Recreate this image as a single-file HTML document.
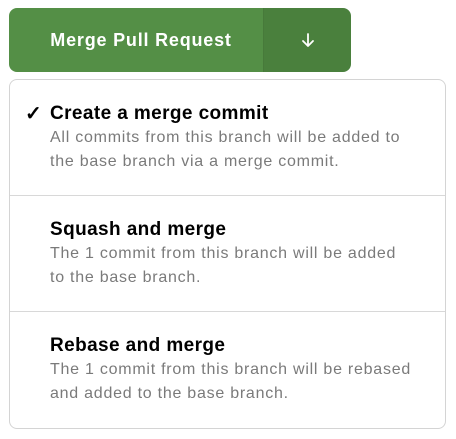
<!DOCTYPE html>
<html><head><style>
body{margin:0;background:#fff;width:456px;height:439px;font-family:"Liberation Sans",Arial,sans-serif;position:relative;overflow:hidden}
.btn{position:absolute;left:9px;top:8px;width:342px;height:64px;border-radius:8px;overflow:hidden;display:flex}
.b1{width:254px;background:#548f46;color:#fff;font-weight:bold;font-size:18px;letter-spacing:0.8px;display:flex;align-items:center;justify-content:center;padding-left:10px;box-sizing:border-box}
.b2{flex:1;background:#4a803d;border-left:1px solid #477a3a;display:flex;align-items:center;justify-content:center}
.panel{position:absolute;left:9px;top:79px;width:437px;height:350px;border:1px solid #d4d4d4;border-radius:8px;box-sizing:border-box}
.sec{padding:22px 0 21px 40px;position:relative}
.sec+.sec{border-top:1px solid #d8d8d8}
.t{font-weight:bold;font-size:19px;letter-spacing:0.4px;line-height:24px;color:#000}
.d{font-size:16px;letter-spacing:0.75px;line-height:24px;color:#7a7a7a;white-space:nowrap}
.chk{position:absolute;left:15px;top:22px;line-height:24px;font-size:20px;font-weight:bold}
</style></head><body>
<div class="btn"><div class="b1">Merge Pull Request</div><div class="b2">
<svg width="14" height="16" viewBox="0 0 14 16"><path d="M7 2v12M2 9l5 5 5-5" stroke="#fff" stroke-width="1.8" fill="none" stroke-linecap="round" stroke-linejoin="round"/></svg></div></div>
<div class="panel">
<div class="sec"><span class="chk">✓</span><div class="t">Create a merge commit</div><div class="d">All commits from this branch will be added to<br>the base branch via a merge commit.</div></div>
<div class="sec"><div class="t">Squash and merge</div><div class="d">The 1 commit from this branch will be added<br>to the base branch.</div></div>
<div class="sec"><div class="t">Rebase and merge</div><div class="d">The 1 commit from this branch will be rebased<br>and added to the base branch.</div></div>
</div>
</body></html>
